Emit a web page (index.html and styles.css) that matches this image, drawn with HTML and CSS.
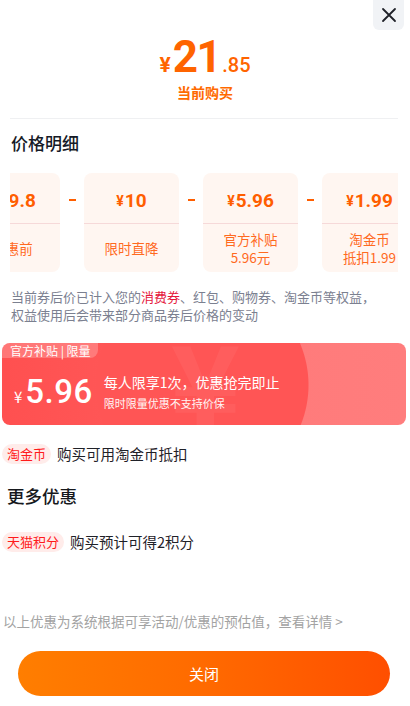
FILE: index.html
```html
<!DOCTYPE html>
<html lang="zh-CN">
<head>
<meta charset="utf-8">
<link rel="stylesheet" href="styles.css">
</head>
<body>
<div class="sheet">
  <button class="close" aria-label="关闭">
    <svg width="16" height="16" viewBox="0 0 16 16"><path d="M2 2L14 14M14 2L2 14" stroke="#1f2128" stroke-width="1.8" stroke-linecap="round"/></svg>
  </button>

  <div class="header">
    <div class="price-main"><span class="cur">¥</span><span class="int">21</span><span class="dec">.85</span></div>
    <div class="price-label">当前购买</div>
  </div>

  <div class="divider"></div>

  <div class="section-title">价格明细</div>

  <div class="cards-viewport">
    <div class="cards-track">
      <div class="pcard">
        <div class="pcard-top"><span class="pc-cur">¥</span>19.8</div>
        <div class="pcard-bottom">优惠前</div>
      </div>
      <div class="minus"><span></span></div>
      <div class="pcard">
        <div class="pcard-top"><span class="pc-cur">¥</span>10</div>
        <div class="pcard-bottom">限时直降</div>
      </div>
      <div class="minus"><span></span></div>
      <div class="pcard">
        <div class="pcard-top"><span class="pc-cur">¥</span>5.96</div>
        <div class="pcard-bottom">官方补贴<br>5.96元</div>
      </div>
      <div class="minus"><span></span></div>
      <div class="pcard">
        <div class="pcard-top"><span class="pc-cur">¥</span>1.99</div>
        <div class="pcard-bottom">淘金币<br>抵扣1.99</div>
      </div>
    </div>
  </div>

  <p class="desc">当前券后价已计入您的<span class="hl">消费券</span>、红包、购物券、淘金币等权益，权益使用后会带来部分商品券后价格的变动</p>

  <div class="promo">
    <div class="promo-tag">官方补贴 | 限量</div>
    <div class="promo-mark">¥</div>
    <div class="promo-body">
      <div class="promo-price"><span class="pp-cur">¥</span><span class="pp-num">5.96</span></div>
      <div class="promo-text">
        <div class="pt-main">每人限享1次，优惠抢完即止</div>
        <div class="pt-sub">限时限量优惠不支持价保</div>
      </div>
    </div>
  </div>

  <div class="row row-coin"><span class="tag">淘金币</span><span class="row-text">购买可用淘金币抵扣</span></div>

  <div class="section-title more">更多优惠</div>

  <div class="row row-points"><span class="tag">天猫积分</span><span class="row-text">购买预计可得2积分</span></div>

  <div class="note">以上优惠为系统根据可享活动/优惠的预估值，查看详情 &gt;</div>

  <button class="btn-close">关闭</button>
</div>
</body>
</html>
```

FILE: styles.css
```css
* { box-sizing: border-box; }
html, body {
  margin: 0;
  padding: 0;
  background: #fff;
}
body {
  width: 410px;
  height: 706px;
  overflow: hidden;
  font-family: "Noto Sans CJK SC", "Noto Sans", sans-serif;
  color: #1f2128;
}
.sheet {
  position: relative;
  display: flex;
  flex-direction: column;
  width: 410px;
}
.close {
  position: absolute;
  top: 0;
  right: 6px;
  width: 31px;
  height: 30px;
  border: 0;
  padding: 0;
  background: #f1f3f6;
  border-radius: 0 0 6px 6px;
  display: flex;
  align-items: center;
  justify-content: center;
}
.header {
  padding-top: 35px;
  display: flex;
  flex-direction: column;
  align-items: center;
  color: #ff6400;
}
.price-main {
  height: 44px;
  line-height: 44px;
  font-family: Roboto, "Noto Sans CJK SC", sans-serif;
  font-weight: 700;
  white-space: nowrap;
}
.price-main .cur {
  font-size: 21px;
  margin-right: 2px;
}
.price-main .int {
  font-size: 44px;
  letter-spacing: -1.5px;
}
.price-main .dec {
  font-size: 20px;
  font-weight: 500;
  margin-left: 2px;
}
.price-label {
  margin-top: 3px;
  font-size: 14px;
  line-height: 20px;
  font-weight: 700;
  color: #ff6a00;
}
.divider {
  margin: 16px 12px 0 10px;
  height: 1px;
  background: #eff0f2;
}
.section-title {
  margin: 12px 0 0 11px;
  font-size: 17px;
  line-height: 24px;
  font-weight: 500;
  color: #151a26;
}
.cards-viewport {
  margin: 18px 12px 0 10px;
  overflow: hidden;
}
.cards-track {
  display: flex;
  margin-left: -45px;
  width: max-content;
}
.pcard {
  flex: none;
  width: 95px;
  height: 99px;
  background: #fff6f1;
  border-radius: 8px;
  display: flex;
  flex-direction: column;
  color: #ff6a14;
}
.pcard-top {
  height: 51px;
  border-bottom: 1px solid #f6d9d9;
  display: flex;
  align-items: center;
  justify-content: center;
  padding-top: 4px;
  font-family: Roboto, "Noto Sans CJK SC", sans-serif;
  font-weight: 700;
  font-size: 19px;
  color: #ff5e00;
  white-space: nowrap;
}
.pc-cur {
  font-size: 14px;
  margin-right: 1px;
  margin-top: 2px;
}
.pcard-bottom {
  flex: 1;
  display: flex;
  align-items: center;
  justify-content: center;
  text-align: center;
  font-size: 13.5px;
  line-height: 18px;
  white-space: nowrap;
  color: #ff6a1f;
}
.minus {
  flex: none;
  width: 24px;
  height: 51px;
  display: flex;
  align-items: center;
  justify-content: center;
}
.minus span {
  display: block;
  width: 7px;
  height: 2px;
  background: #ff5e00;
  margin-top: 2px;
}
.desc {
  margin: 16px 0 0 11px;
  width: 376px;
  font-size: 13px;
  line-height: 18px;
  color: #7b8090;
}
.hl { color: #e5153b; }
.promo {
  position: relative;
  margin: 19px 4px 0 2px;
  height: 82px;
  border-radius: 8px;
  overflow: hidden;
  background:
    radial-gradient(circle at 200px 42px, #ff5555 0, #ff5555 106px, transparent 107px),
    linear-gradient(90deg, #ff5050 0%, #ff5858 35%, #ff7b7b 72%, #ff7d7d 100%);
  color: #fff;
}
.promo-tag {
  position: absolute;
  top: 0;
  left: 0;
  height: 15px;
  padding: 0 7px 0 8px;
  font-size: 12px;
  line-height: 15px;
  background: rgba(255, 255, 255, 0.22);
  border-radius: 0 0 8px 0;
  white-space: nowrap;
}
.promo-mark {
  position: absolute;
  left: 168px;
  top: -22px;
  font-family: "Noto Sans CJK SC", sans-serif;
  font-weight: 700;
  font-size: 120px;
  line-height: 120px;
  color: rgba(255, 255, 255, 0.05);
}
.promo-body {
  position: relative;
  height: 100%;
  display: flex;
  align-items: center;
  padding: 14px 0 0 12px;
}
.promo-price {
  display: flex;
  align-items: baseline;
  white-space: nowrap;
}
.pp-cur {
  font-size: 15px;
  margin-right: 3px;
}
.pp-num {
  font-family: Roboto, sans-serif;
  font-weight: 500;
  font-size: 33px;
  letter-spacing: 0.5px;
}
.promo-text {
  margin-left: 11px;
  display: flex;
  flex-direction: column;
}
.pt-main {
  font-size: 14px;
  line-height: 20px;
  white-space: nowrap;
}
.pt-sub {
  margin-top: 4px;
  font-size: 11px;
  line-height: 15px;
  white-space: nowrap;
  opacity: 0.95;
}
.row {
  display: flex;
  align-items: center;
  margin-left: 2px;
}
.row-coin { margin-top: 19px; }
.row-points { margin-top: 24px; }
.tag {
  height: 20px;
  padding: 0 5px;
  border-radius: 10px;
  background: #ffecea;
  color: #ff1b1b;
  font-size: 13px;
  line-height: 20px;
  white-space: nowrap;
}
.row-text {
  margin-left: 6px;
  font-size: 14.5px;
  line-height: 20px;
  color: #1f2128;
  white-space: nowrap;
}
.section-title.more {
  margin: 20px 0 0 7px;
  font-size: 17.5px;
  font-weight: 500;
  color: #16181d;
}
.note {
  margin: 60px 0 0 3px;
  font-size: 13.5px;
  line-height: 18px;
  color: #a3a3a3;
  white-space: nowrap;
}
.btn-close {
  margin: 21px 0 0 18px;
  width: 372px;
  height: 45px;
  border: 0;
  border-radius: 23px;
  background: linear-gradient(90deg, #ff7e00 0%, #ff6a00 50%, #ff4f00 100%);
  color: #fff;
  font-family: "Noto Sans CJK SC", sans-serif;
  font-size: 15px;
}
```
